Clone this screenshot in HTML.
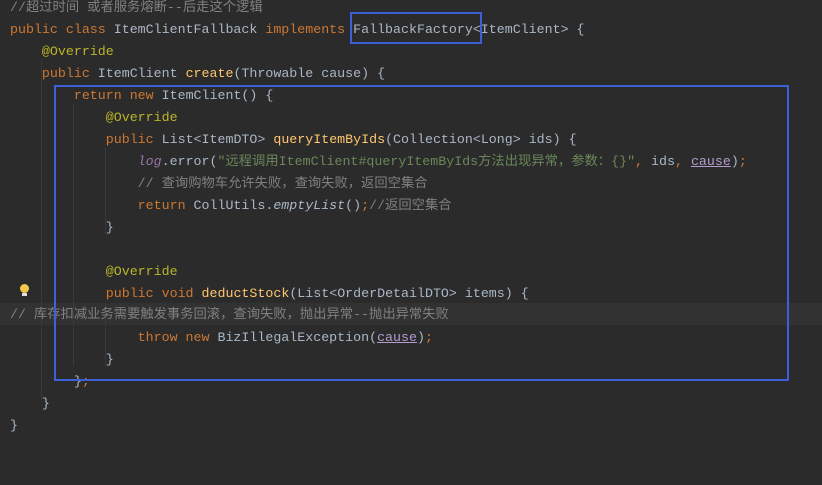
<html><head><style>
body{margin:0;width:822px;height:485px;background:#2b2b2b;overflow:hidden;position:relative;font-family:"Liberation Mono","Noto Sans CJK SC",monospace;font-size:13.3px;color:#a9b7c6}
.l{position:absolute;left:10px;height:22px;line-height:22px;white-space:pre}
.k{color:#cc7832}.a{color:#bbb529}.m{color:#ffc66d}.c{color:#808080}.s{color:#6a8759}.f{color:#9876aa;font-style:italic}.u{color:#b39cd0;text-decoration:underline;text-decoration-color:#b39cd0}.i{font-style:italic}
.g{position:absolute;width:1px;background:#393939}
.box{position:absolute;border:2.5px solid #3d5fd8}
</style></head><body>
<div style="position:absolute;left:0;top:303px;width:822px;height:22px;background:#323232"></div>
<div class="g" style="left:41px;top:60px;height:340px"></div>
<div class="g" style="left:73px;top:104px;height:262px"></div>
<div class="g" style="left:105px;top:148px;height:86px"></div>
<div class="g" style="left:105px;top:302px;height:64px"></div>
<div class="l c" style="top:-3px">//超过时间 或者服务熔断--后走这个逻辑</div>
<div class="l" style="top:19px"><span class="k">public class </span>ItemClientFallback <span class="k">implements </span>FallbackFactory&lt;ItemClient&gt; {</div>
<div class="l" style="top:41px">    <span class="a">@Override</span></div>
<div class="l" style="top:63px">    <span class="k">public </span>ItemClient <span class="m">create</span>(Throwable cause) {</div>
<div class="l" style="top:85px">        <span class="k">return new </span>ItemClient() {</div>
<div class="l" style="top:107px">            <span class="a">@Override</span></div>
<div class="l" style="top:129px">            <span class="k">public </span>List&lt;ItemDTO&gt; <span class="m">queryItemByIds</span>(Collection&lt;Long&gt; ids) {</div>
<div class="l" style="top:151px">                <span class="f">log</span>.error(<span class="s">"远程调用ItemClient#queryItemByIds方法出现异常，参数：{}"</span><span class="k">, </span>ids<span class="k">, </span><span class="u">cause</span>)<span class="k">;</span></div>
<div class="l c" style="top:173px">                // 查询购物车允许失败，查询失败，返回空集合</div>
<div class="l" style="top:195px">                <span class="k">return </span>CollUtils.<span class="i">emptyList</span>()<span class="k">;</span><span class="c">//返回空集合</span></div>
<div class="l" style="top:217px">            }</div>
<div class="l" style="top:261px">            <span class="a">@Override</span></div>
<div class="l" style="top:283px">            <span class="k">public void </span><span class="m">deductStock</span>(List&lt;OrderDetailDTO&gt; items) {</div>
<div class="l c" style="top:304px">// 库存扣减业务需要触发事务回滚，查询失败，抛出异常--抛出异常失败</div>
<div class="l" style="top:327px">                <span class="k">throw new </span>BizIllegalException(<span class="u">cause</span>)<span class="k">;</span></div>
<div class="l" style="top:349px">            }</div>
<div class="l" style="top:371px">        }<span class="k">;</span></div>
<div class="l" style="top:393px">    }</div>
<div class="l" style="top:415px">}</div>
<div style="position:absolute;left:20px;top:284px;width:9px;height:9px;border-radius:50%;background:#f2c94c"></div>
<div style="position:absolute;left:22px;top:293px;width:5px;height:3px;background:#ddd"></div>
<div class="box" style="left:350px;top:12px;width:128px;height:28px"></div>
<div class="box" style="left:54px;top:85px;width:731px;height:292px"></div>
</body></html>
